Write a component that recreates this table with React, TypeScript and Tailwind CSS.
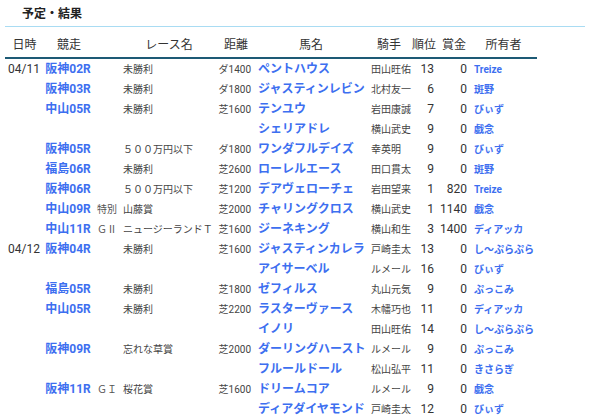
type Row = {
  date?: string;
  race?: string;
  grade?: string;
  name?: string;
  dist?: string;
  horse: string;
  jockey: string;
  rank: string;
  prize: string;
  owner: string;
};

const rows: Row[] = [
  { date: "04/11", race: "阪神02R", name: "未勝利", dist: "ダ1400", horse: "ペントハウス", jockey: "田山旺佑", rank: "13", prize: "0", owner: "Treize" },
  { race: "阪神03R", name: "未勝利", dist: "ダ1800", horse: "ジャスティンレビン", jockey: "北村友一", rank: "6", prize: "0", owner: "斑野" },
  { race: "中山05R", name: "未勝利", dist: "芝1600", horse: "テンユウ", jockey: "岩田康誠", rank: "7", prize: "0", owner: "びぃず" },
  { horse: "シェリアドレ", jockey: "横山武史", rank: "9", prize: "0", owner: "戯念" },
  { race: "阪神05R", name: "５００万円以下", dist: "ダ1800", horse: "ワンダフルデイズ", jockey: "幸英明", rank: "9", prize: "0", owner: "びぃず" },
  { race: "福島06R", name: "未勝利", dist: "芝2600", horse: "ローレルエース", jockey: "田口貫太", rank: "9", prize: "0", owner: "斑野" },
  { race: "阪神06R", name: "５００万円以下", dist: "芝1200", horse: "デアヴェローチェ", jockey: "岩田望来", rank: "1", prize: "820", owner: "Treize" },
  { race: "中山09R", grade: "特別", name: "山藤賞", dist: "芝2000", horse: "チャリングクロス", jockey: "横山武史", rank: "1", prize: "1140", owner: "戯念" },
  { race: "中山11R", grade: "ＧⅡ", name: "ニュージーランドＴ", dist: "芝1600", horse: "ジーネキング", jockey: "横山和生", rank: "3", prize: "1400", owner: "ディアッカ" },
  { date: "04/12", race: "阪神04R", name: "未勝利", dist: "芝1600", horse: "ジャスティンカレラ", jockey: "戸崎圭太", rank: "13", prize: "0", owner: "し〜ぷらぷら" },
  { horse: "アイサーベル", jockey: "ルメール", rank: "16", prize: "0", owner: "びぃず" },
  { race: "福島05R", name: "未勝利", dist: "芝1800", horse: "ゼフィルス", jockey: "丸山元気", rank: "9", prize: "0", owner: "ぷっこみ" },
  { race: "中山05R", name: "未勝利", dist: "芝2200", horse: "ラスターヴァース", jockey: "木幡巧也", rank: "11", prize: "0", owner: "ディアッカ" },
  { horse: "イノリ", jockey: "田山旺佑", rank: "14", prize: "0", owner: "し〜ぷらぷら" },
  { race: "阪神09R", name: "忘れな草賞", dist: "芝2000", horse: "ダーリングハースト", jockey: "ルメール", rank: "9", prize: "0", owner: "ぷっこみ" },
  { horse: "フルールドール", jockey: "松山弘平", rank: "11", prize: "0", owner: "きさらぎ" },
  { race: "阪神11R", grade: "ＧＩ", name: "桜花賞", dist: "芝1600", horse: "ドリームコア", jockey: "ルメール", rank: "9", prize: "0", owner: "戯念" },
  { horse: "ディアダイヤモンド", jockey: "戸崎圭太", rank: "12", prize: "0", owner: "びぃず" },
];

const cols =
  "grid grid-cols-[39px_50px_26px_98px_36px_114px_42px_28px_32px_67px]";

export default function App() {
  return (
    <div
      className="w-[590px] h-[419px] overflow-hidden bg-white px-[5px] text-[#333]"
      style={{ fontFamily: "Roboto, 'Noto Sans CJK JP', sans-serif" }}
    >
      <div className="h-[27px] pt-[2px] border-b border-[#a9dcf3] flex items-center pl-[17px]">
        <h2 className="text-[12px] font-bold leading-none text-[#222]">予定・結果</h2>
      </div>

      <div className="w-[532px]">
        <div className={`${cols} h-[32px] items-end pb-[4px] border-b-2 border-[#1d5a75] text-[12px] leading-4 text-[#333]`}>
          <div className="text-center">日時</div>
          <div className="text-center">競走</div>
          <div></div>
          <div className="text-center">レース名</div>
          <div className="text-center">距離</div>
          <div className="text-center">馬名</div>
          <div className="text-center">騎手</div>
          <div className="text-center">順位</div>
          <div className="text-center">賞金</div>
          <div className="text-center">所有者</div>
        </div>

        {rows.map((r, i) => (
          <div key={i} className={`${cols} h-[20px] items-center whitespace-nowrap`}>
            <div className="text-[12px] text-[#333] text-right pr-[4px]">{r.date}</div>
            <div className="text-[12px] font-bold text-[#3d6ff0] text-center pr-[2px]">{r.race}</div>
            <div className="text-[10px] text-[#555] pl-[3px]">{r.grade}</div>
            <div className="text-[10px] text-[#444] pl-[3px]">{r.name}</div>
            <div className="text-[10px] text-[#444] text-right pr-[3px]">{r.dist}</div>
            <div className="text-[12px] font-bold text-[#3d6ff0] pl-[4px]">{r.horse}</div>
            <div className="text-[10px] text-[#444] pl-[3px]">{r.jockey}</div>
            <div className="text-[12px] text-[#333] text-right pr-[4px]">{r.rank}</div>
            <div className="text-[12px] text-[#333] text-right pr-[3px]">{r.prize}</div>
            <div className="text-[10px] font-bold text-[#3d6ff0] pl-[4px]">{r.owner}</div>
          </div>
        ))}
      </div>
    </div>
  );
}
